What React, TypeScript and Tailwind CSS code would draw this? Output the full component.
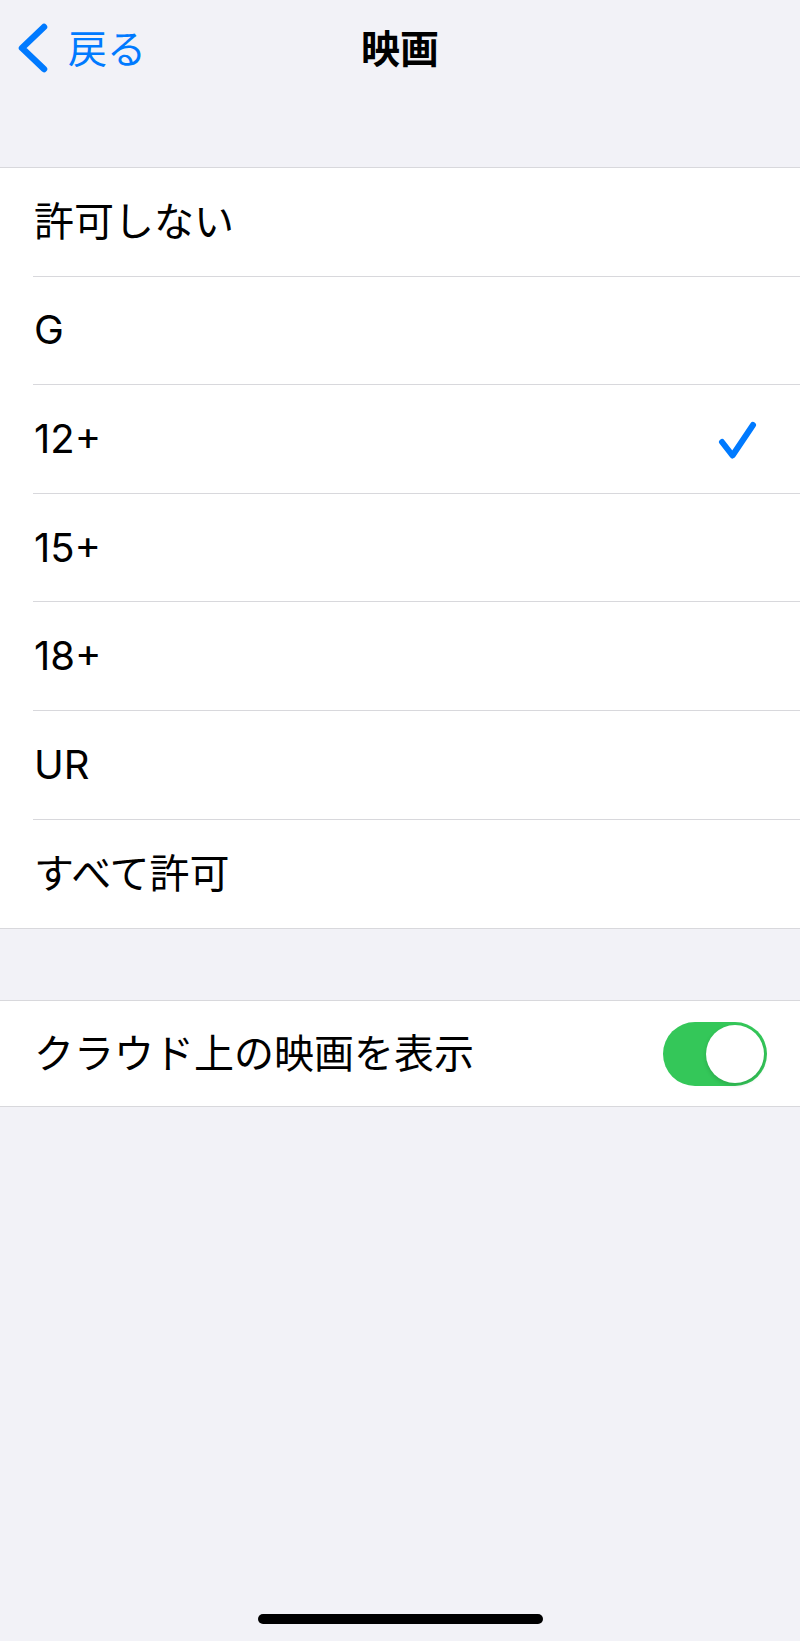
const font = { fontFamily: 'Inter, "Noto Sans CJK JP", sans-serif' };

const options = ["許可しない", "G", "12+", "15+", "18+", "UR", "すべて許可"];
const selected = "12+";

function Check() {
  return (
    <svg width="44" height="44" viewBox="0 0 44 44" fill="none">
      <path d="M6 25L16.5 38.5L37 8" stroke="#007aff" strokeWidth="6" strokeLinecap="round" strokeLinejoin="round" />
    </svg>
  );
}

export default function App() {
  return (
    <div className="min-h-[1641px] bg-[#f2f2f7] flex flex-col text-black" style={font}>
      {/* NAV */}
      <header className="h-[168px] border-b border-[#d8d8dc]">
        <div className="grid grid-cols-[1fr_auto_1fr] items-center h-[96px]">
          <div className="flex items-center pl-[18px] gap-[18px] text-[#007aff]">
            <svg width="32" height="50" viewBox="0 0 32 50" fill="none">
              <path d="M26 4L4 25L26 46" stroke="#007aff" strokeWidth="6.5" strokeLinecap="round" strokeLinejoin="round" />
            </svg>
            <span className="text-[39px] leading-none">戻る</span>
          </div>
          <h1 className="text-[39px] font-bold leading-none">映画</h1>
          <div />
        </div>
      </header>

      {/* OPTIONS */}
      <ul className="bg-white border-b border-[#d8d8dc]">
        {options.map((o, i) => (
          <li key={o} className="pl-[33px]">
            <div
              className={
                "flex items-center justify-between h-[108.6px] pr-[40px] " +
                (i < options.length - 1 ? "border-b border-[#d8d8dc]" : "")
              }
            >
              <span className="text-[40px] leading-none pl-[1px]">{o}</span>
              {o === selected && <Check />}
            </div>
          </li>
        ))}
      </ul>

      {/* CLOUD TOGGLE */}
      <div className="mt-[71px] bg-white border-y border-[#d8d8dc] h-[107px] flex items-center justify-between pl-[34px] pr-[33px]">
        <span className="text-[40px] leading-none">クラウド上の映画を表示</span>
        <div className="w-[104px] h-[64px] rounded-full bg-[#34c759] flex items-center justify-end pr-[3px]">
          <div className="w-[58px] h-[58px] rounded-full bg-white shadow-[0_2px_4px_rgba(0,0,0,0.15)]" />
        </div>
      </div>

      <div className="flex-1" />
      <div className="flex justify-center pb-[17px]">
        <div className="w-[285px] h-[10px] rounded-full bg-black" />
      </div>
    </div>
  );
}
